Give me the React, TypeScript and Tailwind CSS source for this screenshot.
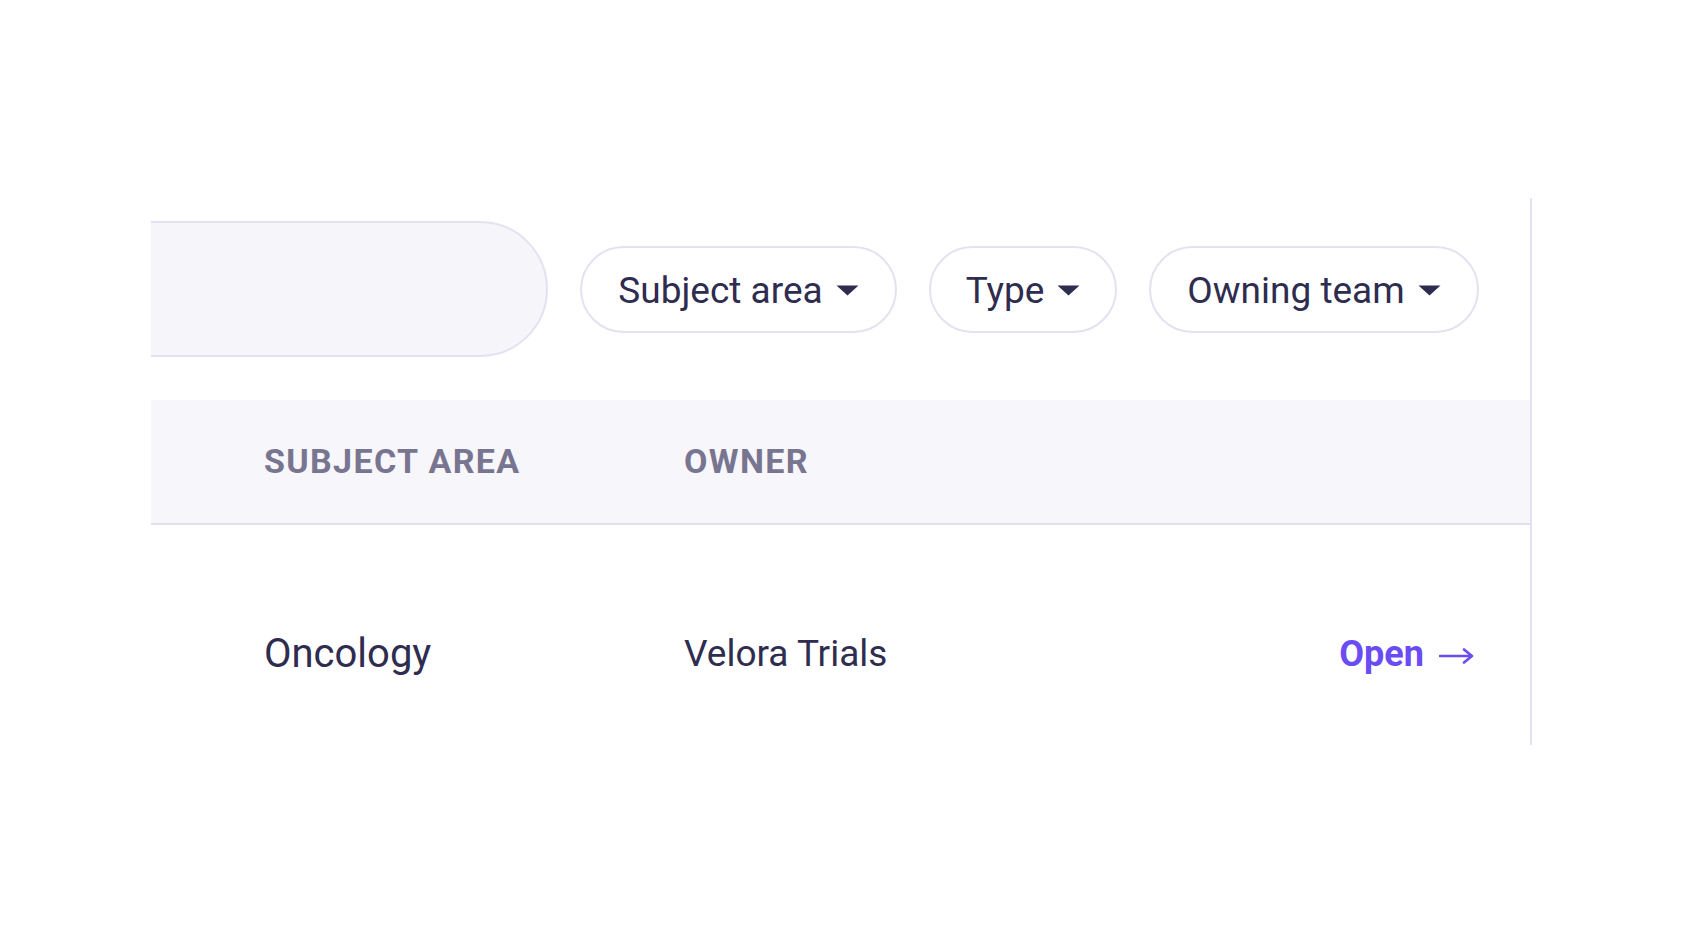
import { ReactNode } from "react";

function Caret() {
  return (
    <svg width="23" height="11" viewBox="0 0 23 11" className="flex-shrink-0">
      <path d="M0.5 0.5h22L11.5 10.5z" fill="#2e2c4f" />
    </svg>
  );
}

function ArrowRight() {
  return (
    <svg width="36" height="18" viewBox="0 0 36 18" fill="none" className="flex-shrink-0 mt-[4px]">
      <path d="M1 9h32M25 2.5l8 6.5-8 6.5" stroke="#6a4cf4" strokeWidth="2.6" strokeLinecap="round" strokeLinejoin="round" />
    </svg>
  );
}

function FilterPill({ label, width }: { label: string; width: string }) {
  return (
    <button
      className={`${width} h-[87px] pt-[3px] flex items-center justify-center gap-[13px] rounded-full border-2 border-[#e4e2f0] bg-white text-[37px] text-[#2e2c4f] flex-shrink-0`}
    >
      <span>{label}</span>
      <Caret />
    </button>
  );
}

function HeaderCell({ children, className = "" }: { children: ReactNode; className?: string }) {
  return (
    <div className={`text-[34px] font-bold tracking-[0.04em] uppercase text-[#77758f] ${className}`}>
      {children}
    </div>
  );
}

export default function App() {
  return (
    <div
      className="w-[1689px] h-[945px] bg-white pt-[198px] pl-[151px]"
      style={{ fontFamily: "Roboto, 'Liberation Sans', sans-serif" }}
    >
      <div className="w-[1381px] h-[547px] border-r-2 border-[#e4e2f0] overflow-hidden">
        {/* Toolbar */}
        <div className="pt-[23px] flex items-center gap-[32px]">
          <div className="-ml-[123px] w-[520px] h-[136px] flex-shrink-0 rounded-full border-2 border-[#e4e2f0] bg-[#f6f5fa]" />
          <FilterPill label="Subject area" width="w-[317px]" />
          <FilterPill label="Type" width="w-[188px]" />
          <FilterPill label="Owning team" width="w-[330px]" />
        </div>

        {/* Table header */}
        <div className="mt-[43px] h-[125px] flex items-center pl-[113px] bg-[#f7f6fb] border-b-2 border-[#e2e0ef]">
          <HeaderCell className="w-[420px]">Subject area</HeaderCell>
          <HeaderCell>Owner</HeaderCell>
        </div>

        {/* Row */}
        <div className="h-[258px] flex items-center pl-[113px] pr-[55px]">
          <div className="w-[420px] text-[40px] text-[#2e2c4f]">Oncology</div>
          <div className="text-[37px] text-[#2e2c4f]">Velora Trials</div>
          <a href="#" className="ml-auto flex items-center gap-[15px] text-[36px] font-bold text-[#6a4cf4] whitespace-nowrap">
            <span>Open</span>
            <ArrowRight />
          </a>
        </div>
      </div>
    </div>
  );
}
